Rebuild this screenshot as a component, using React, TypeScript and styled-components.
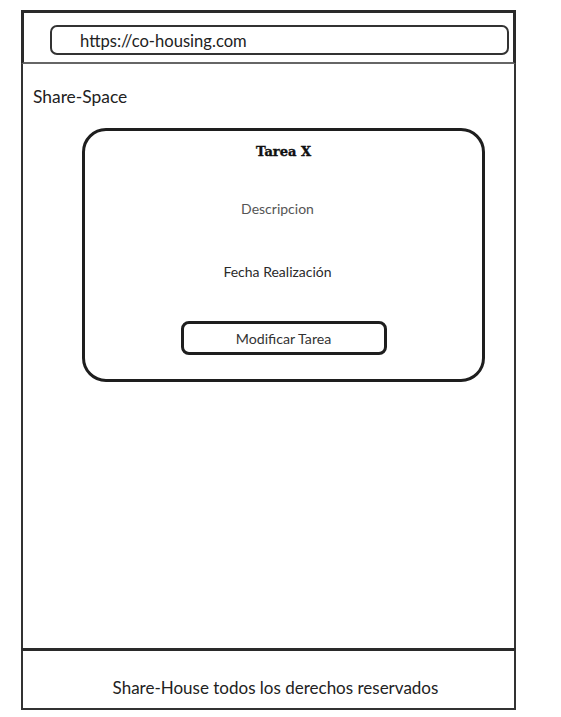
import React from "react";
import styled, { createGlobalStyle } from "styled-components";

const Global = createGlobalStyle`
  html, body { margin: 0; padding: 0; background: #fff; }
  body { font-family: "Lato", "Open Sans", sans-serif; color: #222; }
`;

const Frame = styled.div`
  margin: 10px 0 0 21px;
  width: 495px;
  height: 700px;
  display: flex;
  flex-direction: column;
  box-sizing: border-box;
`;

const Header = styled.header`
  height: 54px;
  box-sizing: border-box;
  border: 3px solid #2a2a2a;
  border-bottom: 2px solid #666;
  padding: 12px 4px 0 26px;
`;

const UrlBar = styled.div`
  height: 30px;
  box-sizing: border-box;
  border: 2px solid #333;
  border-radius: 7px;
  display: flex;
  align-items: center;
  padding: 1px 0 0 28px;
  font-size: 16.6px;
  color: #222;
`;

const Main = styled.main`
  flex: 1;
  border-left: 2px solid #333;
  border-right: 2px solid #333;
  display: flex;
  flex-direction: column;
  padding: 0 0 0 10px;
`;

const Brand = styled.div`
  font-size: 17.4px;
  color: #222;
  margin-top: 23px;
  line-height: 20px;
`;

const Card = styled.section`
  margin: 21px 0 0 49px;
  width: 403px;
  height: 254px;
  box-sizing: border-box;
  border: 3px solid #1e1e1e;
  border-radius: 24px;
  display: flex;
  flex-direction: column;
  align-items: center;
`;

const Title = styled.h2`
  margin: 12px 0 0;
  font-family: "DejaVu Serif", serif;
  font-weight: 700;
  font-size: 13px;
  line-height: 18px;
  color: #111;
  -webkit-text-stroke: 0.4px #111;
`;

const Field = styled.div<{ $top: number; $muted?: boolean }>`
  margin-top: ${(p) => p.$top}px;
  font-size: 14px;
  line-height: 16px;
  color: ${(p) => (p.$muted ? "#555" : "#2a2a2a")};
  transform: translateX(-6px);
`;

const Button = styled.button`
  margin-top: 41px;
  width: 206px;
  height: 34px;
  box-sizing: border-box;
  border: 3px solid #1e1e1e;
  border-radius: 8px;
  background: #fff;
  font-family: "Lato", "Open Sans", sans-serif;
  font-size: 14.2px;
  color: #333;
  padding: 0;
`;

const Footer = styled.footer`
  height: 62px;
  box-sizing: border-box;
  border: 2px solid #333;
  border-top: 3px solid #2a2a2a;
  display: flex;
  align-items: flex-end;
  justify-content: center;
  padding: 0 0 10px 14px;
  font-size: 17px;
  color: #222;
`;

export default function App() {
  return (
    <>
      <Global />
      <Frame>
        <Header>
          <UrlBar>https://co-housing.com</UrlBar>
        </Header>
        <Main>
          <Brand>Share-Space</Brand>
          <Card>
            <Title>Tarea X</Title>
            <Field $top={40} $muted>
              Descripcion
            </Field>
            <Field $top={47}>Fecha Realización</Field>
            <Button>Modificar Tarea</Button>
          </Card>
        </Main>
        <Footer>Share-House todos los derechos reservados</Footer>
      </Frame>
    </>
  );
}
